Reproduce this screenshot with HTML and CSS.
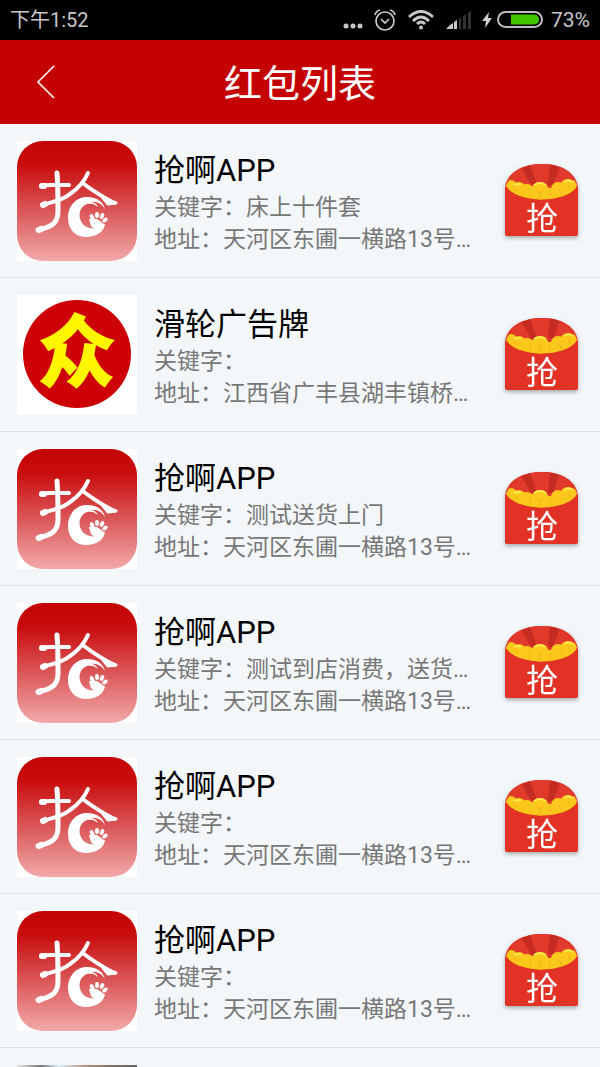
FILE: index.html
```html
<!DOCTYPE html>
<html lang="zh-CN">
<head>
<meta charset="utf-8">
<meta name="viewport" content="width=device-width, initial-scale=1">
<title>红包列表</title>
<link rel="stylesheet" href="styles.css">
</head>
<body>
<svg class="sprite" aria-hidden="true">
  <defs>
    <linearGradient id="logo-bg" x1="0" y1="0" x2="0" y2="1">
      <stop offset="0" stop-color="#c30303"/>
      <stop offset=".2" stop-color="#c90d0d"/>
      <stop offset=".6" stop-color="#dc5a5c"/>
      <stop offset="1" stop-color="#f2a9aa"/>
    </linearGradient>
    <clipPath id="flap"><path d="M2 23C8 8 22 1 38 1S68 8 73 23C62 41 14 41 2 23Z"/></clipPath>
  </defs>
  <symbol id="app-logo" viewBox="0 0 120 120">
    <rect width="120" height="120" fill="#fff"/>
    <rect width="120" height="120" rx="26" fill="url(#logo-bg)"/>
    <g fill="none" stroke="#fff" stroke-width="4" stroke-linecap="round" stroke-linejoin="round">
      <path stroke-width="5" d="M40 32C41 44 41 60 41 70C41 82 35 86 21 89"/>
      <path d="M24 45Q28 44 34 44L52 44"/>
      <path d="M25 64C34 61 45 60 53 53C62 47 67 41 71 32"/>
      <path d="M67 43C76 50 86 56 97 62"/>
    </g>
    <g fill="#fff" stroke="#fff" stroke-linejoin="round" stroke-linecap="round">
      <path stroke-width="6" d="M22 89L24 88M25 45L27 45M26 64L28 63"/>
      <path stroke-width="3" d="M86 57L99 62L91 63Z"/>
      <path stroke="none" d="M88 68C86 60 79 56 70 56C58 56 51 66 51 77C51 89 59 96 69 96C79 96 87 91 88 83C80 90 69 88 65 82C60 74 63 66 70 63C74 62 78 63 81 66C80 63 77 61 74 61C80 60 85 63 88 68Z"/>
    </g>
    <g fill="#fff">
      <path d="M72 78C76 77 80 77 83 80L88 84C84 90 78 90 74 85Z"/>
      <ellipse cx="75" cy="76" rx="2" ry="3" transform="rotate(-25 75 76)"/>
      <ellipse cx="80" cy="74" rx="2" ry="3"/>
      <ellipse cx="85" cy="75" rx="2" ry="3" transform="rotate(25 85 75)"/>
      <ellipse cx="88" cy="79" rx="2" ry="3" transform="rotate(50 88 79)"/>
    </g>
  </symbol>
  <symbol id="envelope" viewBox="0 0 75 75">
    <path fill="#e23225" d="M1 25C3 8 20 1 38 1S72 8 74 25V71Q74 73 72 73H3Q1 73 1 71Z"/>
    <g clip-path="url(#flap)">
      <rect width="75" height="40" fill="#e13a2c"/>
      <path fill="#c52b20" d="M17 4L26 1L33 22L27 22ZM46 0L56 3L49 22L44 22Z"/>
      <g fill="#fcc81c">
        <circle cx="7" cy="23" r="6"/><circle cx="15" cy="26" r="7"/><circle cx="23" cy="28" r="7"/>
        <circle cx="36" cy="28" r="9"/><circle cx="54" cy="26" r="7"/><circle cx="64" cy="24" r="8"/>
        <circle cx="72" cy="22" r="5"/><rect y="25" width="75" height="14"/>
      </g>
      <g fill="none" stroke="#f2b214">
        <path d="M33 27L36 30L39 27M36 30V35M46 27V35M26 26V34M64 22L67 27M55 26L58 32M9 24L13 28"/>
      </g>
      <path fill="none" stroke="#fee94a" stroke-width="2" d="M30 22Q36 18 42 22M60 19Q65 16 69 19M10 22Q13 20 17 22"/>
    </g>
  </symbol>
</svg>

<div class="status-bar">
  <span class="time">下午1:52</span>
  <div class="status-icons">
    <svg width="20" height="20" viewBox="0 0 20 20" fill="#c8c8c8" aria-hidden="true"><circle cx="3" cy="16" r="2.5"/><circle cx="10" cy="16" r="2.5"/><circle cx="17" cy="16" r="2.5"/></svg>
    <svg class="alarm" width="24" height="24" viewBox="0 0 24 24" fill="none" stroke="#c8c8c8" stroke-width="1.7" aria-hidden="true"><circle cx="12" cy="13" r="9"/><path d="M8 11L12 15L16 11M2 7Q3 3 7 2M17 2Q21 3 22 7"/></svg>
    <svg class="wifi" width="26" height="22" viewBox="0 0 26 22" fill="none" stroke="#c8c8c8" stroke-width="2.8" aria-hidden="true"><path d="M1 8Q13-3 25 8M5 12Q13 4 21 12M9 15Q13 11 17 15"/><circle cx="13" cy="18.5" r="2" fill="#c8c8c8" stroke="none"/></svg>
    <svg class="signal" width="26" height="18" viewBox="0 0 26 18" aria-hidden="true"><path fill="#c8c8c8" d="M0 18L4 14V18ZM4 14L7 12V18H4ZM8 11L11 9V18H8Z"/><path fill="#333" d="M13 8L15 6V18H13ZM17 5L20 3V18H17ZM22 2L25 0V18H22Z"/></svg>
    <svg class="bolt" width="10" height="16" viewBox="0 0 10 16" fill="#d0d0d0" aria-hidden="true"><path d="M7 0L0 9H4L3 16L10 6H6Z"/></svg>
    <svg class="battery" width="46" height="18" viewBox="0 0 46 18" aria-hidden="true"><rect x="1" y="1" width="44" height="15" rx="7.5" fill="none" stroke="#bdbdbd" stroke-width="2"/><path fill="#43c600" d="M14 3.5H37Q42 4 42 8.5T37 13.5H14Z"/></svg>
    <span class="percent">73%</span>
  </div>
</div>

<header class="header">
  <button class="back" type="button" aria-label="返回">
    <svg width="20" height="34" viewBox="0 0 20 34" fill="none" stroke="#fff" stroke-width="1.6"><path d="M18 1L2 17L18 33"/></svg>
  </button>
  <h1 class="title">红包列表</h1>
</header>

<main class="content">
  <ul class="list">
    <li class="row">
      <svg class="thumb" role="img" aria-label="抢啊APP"><use href="#app-logo"/></svg>
      <div class="info"><h2 class="name">抢啊APP</h2><p class="line">关键字：床上十件套</p><p class="line">地址：天河区东圃一横路13号…</p></div>
      <button class="grab" type="button"><svg class="grab-icon" viewBox="0 0 75 75"><use href="#envelope"/><text x="38" y="67" text-anchor="middle" class="envelope-text">抢</text></svg></button>
    </li>
    <li class="row">
      <svg class="thumb" viewBox="0 0 120 120" role="img" aria-label="滑轮广告牌">
        <rect width="120" height="120" fill="#fff"/>
        <circle cx="60" cy="59" r="54" fill="#cd0006"/>
        <text x="60" y="86" text-anchor="middle" class="logo-zhong">众</text>
      </svg>
      <div class="info"><h2 class="name">滑轮广告牌</h2><p class="line">关键字：</p><p class="line">地址：江西省广丰县湖丰镇桥…</p></div>
      <button class="grab" type="button"><svg class="grab-icon" viewBox="0 0 75 75"><use href="#envelope"/><text x="38" y="67" text-anchor="middle" class="envelope-text">抢</text></svg></button>
    </li>
    <li class="row">
      <svg class="thumb" role="img" aria-label="抢啊APP"><use href="#app-logo"/></svg>
      <div class="info"><h2 class="name">抢啊APP</h2><p class="line">关键字：测试送货上门</p><p class="line">地址：天河区东圃一横路13号…</p></div>
      <button class="grab" type="button"><svg class="grab-icon" viewBox="0 0 75 75"><use href="#envelope"/><text x="38" y="67" text-anchor="middle" class="envelope-text">抢</text></svg></button>
    </li>
    <li class="row">
      <svg class="thumb" role="img" aria-label="抢啊APP"><use href="#app-logo"/></svg>
      <div class="info"><h2 class="name">抢啊APP</h2><p class="line">关键字：测试到店消费，送货…</p><p class="line">地址：天河区东圃一横路13号…</p></div>
      <button class="grab" type="button"><svg class="grab-icon" viewBox="0 0 75 75"><use href="#envelope"/><text x="38" y="67" text-anchor="middle" class="envelope-text">抢</text></svg></button>
    </li>
    <li class="row">
      <svg class="thumb" role="img" aria-label="抢啊APP"><use href="#app-logo"/></svg>
      <div class="info"><h2 class="name">抢啊APP</h2><p class="line">关键字：</p><p class="line">地址：天河区东圃一横路13号…</p></div>
      <button class="grab" type="button"><svg class="grab-icon" viewBox="0 0 75 75"><use href="#envelope"/><text x="38" y="67" text-anchor="middle" class="envelope-text">抢</text></svg></button>
    </li>
    <li class="row">
      <svg class="thumb" role="img" aria-label="抢啊APP"><use href="#app-logo"/></svg>
      <div class="info"><h2 class="name">抢啊APP</h2><p class="line">关键字：</p><p class="line">地址：天河区东圃一横路13号…</p></div>
      <button class="grab" type="button"><svg class="grab-icon" viewBox="0 0 75 75"><use href="#envelope"/><text x="38" y="67" text-anchor="middle" class="envelope-text">抢</text></svg></button>
    </li>
    <li class="row">
      <div class="thumb photo"></div>
    </li>
  </ul>
</main>
</body>
</html>
```

FILE: styles.css
```css
* {
  box-sizing: border-box;
}

body {
  margin: 0;
  height: 100vh;
  display: flex;
  flex-direction: column;
  background: #f3f7fa;
  font-family: Roboto, "Noto Sans CJK SC", sans-serif;
}

h1, h2, p, ul {
  margin: 0;
  padding: 0;
  font-weight: 400;
}

button {
  padding: 0;
  border: 0;
  background: none;
  cursor: pointer;
}

svg {
  display: block;
  flex: none;
}

.sprite {
  position: absolute;
  width: 0;
  height: 0;
}

.status-bar {
  flex: none;
  height: 40px;
  padding: 0 10px;
  display: flex;
  align-items: center;
  justify-content: space-between;
  background: #000;
  color: #c8c8c8;
  font-size: 20px;
  line-height: 40px;
}

.status-icons {
  display: flex;
  align-items: center;
}

.alarm { margin-left: 10px; }
.wifi { margin-left: 11px; }
.signal { margin-left: 12px; }
.bolt { margin-left: 10px; }
.battery { margin: 0 8px 0 5px; }

.percent {
  font-size: 21px;
}

.header {
  flex: none;
  height: 84px;
  display: grid;
  grid-template-columns: 92px 1fr 92px;
  align-items: center;
  background: #c40202;
  color: #fff;
}

.back {
  display: flex;
  align-items: center;
  justify-content: center;
  height: 84px;
}

.title {
  padding-top: 4px;
  font-size: 38px;
  line-height: 56px;
  text-align: center;
}

.content {
  flex: 1;
  min-height: 0;
  overflow-y: auto;
  scrollbar-width: none;
}

.list {
  list-style: none;
}

.row {
  display: flex;
  align-items: center;
  gap: 17px;
  padding: 17px 21px 16px 17px;
  border-bottom: 1px solid #dde0e2;
}

.thumb {
  flex: none;
  width: 120px;
  height: 120px;
  overflow: visible;
}

.info {
  flex: 1;
  min-width: 0;
  padding-top: 4px;
}

.name {
  color: #000;
  font-size: 31px;
  line-height: 42px;
}

.line {
  color: #777;
  font-size: 23px;
  line-height: 32px;
  white-space: nowrap;
}

.grab {
  flex: none;
  padding-bottom: 2px;
  filter: drop-shadow(0 2px 2px rgba(90, 90, 90, 0.5));
}

.grab-icon {
  width: 75px;
  height: 75px;
  overflow: visible;
}

.logo-zhong {
  fill: #fff600;
  font-family: "Noto Sans CJK SC", sans-serif;
  font-size: 80px;
  font-weight: 900;
}

.envelope-text {
  fill: #fff;
  font-family: "Noto Sans CJK SC", sans-serif;
  font-size: 32px;
}

.photo {
  background: linear-gradient(90deg, #e8e4e0, #777 20%, #dff1fb 35%, #b99a86 55%, #8b7466 75%, #666);
}
```
